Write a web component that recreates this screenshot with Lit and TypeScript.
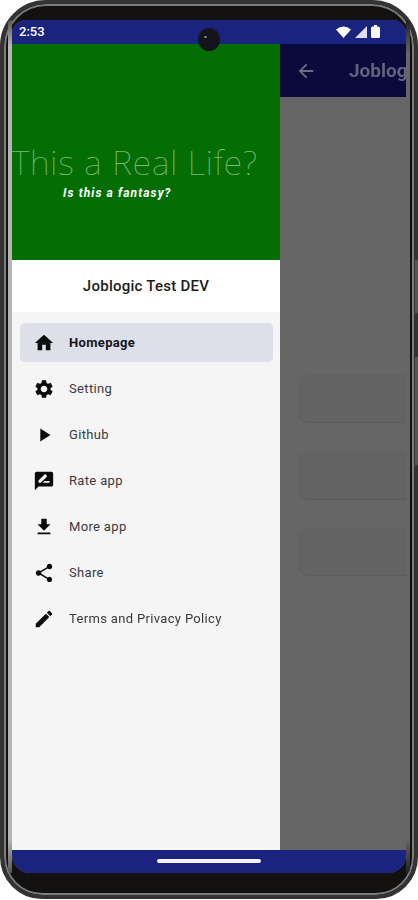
import { LitElement, html, css, svg } from "lit";
import { customElement } from "lit/decorators.js";

const ICONS: Record<string, string> = {
  home: "M10 20v-6h4v6h5v-8h3L12 3 2 12h3v8z",
  settings: "M19.14 12.94c.04-.3.06-.61.06-.94 0-.32-.02-.64-.07-.94l2.03-1.58c.18-.14.23-.41.12-.61l-1.92-3.32c-.12-.22-.37-.29-.59-.22l-2.39.96c-.5-.38-1.03-.7-1.62-.94l-.36-2.54c-.04-.24-.24-.41-.48-.41h-3.84c-.24 0-.43.17-.47.41l-.36 2.54c-.59.24-1.13.57-1.62.94l-2.39-.96c-.22-.08-.47 0-.59.22L2.74 8.87c-.12.21-.08.47.12.61l2.03 1.58c-.05.3-.09.63-.09.94s.02.64.07.94l-2.03 1.58c-.18.14-.23.41-.12.61l1.92 3.32c.12.22.37.29.59.22l2.39-.96c.5.38 1.03.7 1.62.94l.36 2.54c.05.24.24.41.48.41h3.84c.24 0 .44-.17.47-.41l.36-2.54c.59-.24 1.13-.56 1.62-.94l2.39.96c.22.08.47 0 .59-.22l1.92-3.32c.12-.22.07-.47-.12-.61l-2.01-1.58zM12 15.6c-1.98 0-3.6-1.62-3.6-3.6s1.62-3.6 3.6-3.6 3.6 1.62 3.6 3.6-1.62 3.6-3.6 3.6z",
  play: "M8 5v14l11-7z",
  rate: "M20 2H4c-1.1 0-1.99.9-1.99 2L2 22l4-4h14c1.1 0 2-.9 2-2V4c0-1.1-.9-2-2-2zM6 14v-2.47l6.88-6.88c.2-.2.51-.2.71 0l1.77 1.77c.2.2.2.51 0 .71L8.47 14H6zm12 0h-7.5l2-2H18v2z",
  download: "M19 9h-4V3H9v6H5l7 7 7-7zM5 18v2h14v-2H5z",
  share: "M18 16.08c-.76 0-1.44.3-1.96.77L8.91 12.7c.05-.23.09-.46.09-.7s-.04-.47-.09-.7l7.05-4.11c.54.5 1.25.81 2.04.81 1.66 0 3-1.34 3-3s-1.34-3-3-3-3 1.34-3 3c0 .24.04.47.09.7L8.04 9.81C7.5 9.31 6.79 9 6 9c-1.66 0-3 1.34-3 3s1.34 3 3 3c.79 0 1.5-.31 2.04-.81l7.12 4.16c-.05.21-.08.43-.08.65 0 1.61 1.31 2.92 2.92 2.92s2.92-1.31 2.92-2.92-1.31-2.92-2.92-2.92z",
  edit: "M3 17.25V21h3.75L17.81 9.94l-3.75-3.75L3 17.25zM20.71 7.04c.39-.39.39-1.02 0-1.41l-2.34-2.34c-.39-.39-1.02-.39-1.41 0l-1.83 1.83 3.75 3.75 1.83-1.83z",
  back: "M20 11H7.83l5.59-5.59L12 4l-8 8 8 8 1.41-1.41L7.83 13H20v-2z",
};

const ITEMS = [
  { icon: "home", label: "Homepage", active: true },
  { icon: "settings", label: "Setting" },
  { icon: "play", label: "Github" },
  { icon: "rate", label: "Rate app" },
  { icon: "download", label: "More app" },
  { icon: "share", label: "Share" },
  { icon: "edit", label: "Terms and Privacy Policy" },
];

const icon = (name: string, cls = "icon") =>
  html`<svg class=${cls} viewBox="0 0 24 24">${svg`<path d=${ICONS[name]}></path>`}</svg>`;

@customElement("app-root")
export class AppRoot extends LitElement {
  static styles = css`
    :host {
      display: block;
      position: relative;
      width: 418px;
      height: 900px;
      background: #fff;
      font-family: Roboto, "Liberation Sans", sans-serif;
      overflow: hidden;
    }
    .phone {
      position: relative;
      box-sizing: border-box;
      width: 418px;
      height: 899px;
      background: #121110;
      border: 4px solid #333;
      border-radius: 46px 46px 42px 42px;
      padding: 16px 4px 22px 4px;
      display: flex;
      box-shadow: inset 0 0 0 2px #7c7c7c;
      filter: blur(0.45px);
    }
    .edge {
      width: 4px;
      flex: none;
      background: linear-gradient(#555, #b4b4b4 3%, #b4b4b4 96%, #555);
      border-radius: 14px 0 0 14px;
    }
    .edge.right {
      background: linear-gradient(#222, #666 4%, #666 96%, #222);
      border-radius: 0 14px 14px 0;
    }
    .screen {
      flex: 1;
      min-width: 0;
      display: flex;
      flex-direction: column;
      border-radius: 14px 14px 18px 18px;
      overflow: hidden;
      background: #666;
    }
    .status {
      height: 23px;
      flex: none;
      background: #1a237e;
      color: #fff;
      display: flex;
      align-items: center;
      justify-content: space-between;
      padding: 0 26px 1px 7px;
      font-size: 13px;
      font-weight: 500;
    }
    .status-icons {
      display: flex;
      align-items: center;
      gap: 4px;
    }
    .status-icons svg {
      display: block;
      fill: #fff;
    }
    .camera {
      position: absolute;
      left: 194px;
      top: 24px;
      width: 22px;
      height: 23px;
      border-radius: 50%;
      background: #14141c;
    }
    .camera::after {
      content: "";
      position: absolute;
      left: 6px;
      top: 8px;
      width: 3px;
      height: 2px;
      border-radius: 50%;
      background: #8a8a98;
    }
    .side {
      position: absolute;
      right: 0;
      width: 3px;
      background: #555;
    }
    .side.power {
      top: 260px;
      height: 53px;
    }
    .side.volume {
      top: 357px;
      height: 108px;
    }
    .main {
      flex: 1;
      min-height: 0;
      display: flex;
    }
    .drawer {
      width: 268px;
      flex: none;
      display: flex;
      flex-direction: column;
      background: #f5f5f5;
    }
    .hero {
      height: 216px;
      flex: none;
      background: #046e04;
      display: flex;
      flex-direction: column;
      align-items: flex-start;
      padding-top: 96px;
      box-sizing: border-box;
    }
    .hero-title {
      font-family: "Noto Sans", sans-serif;
      font-weight: 100;
      font-size: 34px;
      line-height: 44px;
      letter-spacing: 0.85px;
      color: #7dbb7d;
      white-space: nowrap;
    }
    .hero-sub {
      font-size: 12px;
      line-height: 14px;
      font-weight: 700;
      font-style: italic;
      letter-spacing: 1.1px;
      color: #fff;
      margin: 2px 0 0 51px;
    }
    .app-name {
      height: 52px;
      flex: none;
      background: #fff;
      display: flex;
      align-items: center;
      justify-content: center;
      font-size: 15px;
      font-weight: 500;
      letter-spacing: 0.25px;
      color: #1c1c1c;
    }
    .list {
      flex: 1;
      display: flex;
      flex-direction: column;
      gap: 7px;
      padding: 11px 7px 0 8px;
    }
    .row {
      height: 39px;
      display: flex;
      align-items: center;
      gap: 14px;
      padding-left: 13px;
      border-radius: 5px;
      font-size: 13px;
      font-weight: 400;
      letter-spacing: 0.34px;
      color: #3a3a3a;
    }
    .row.active {
      background: #dddfe9;
      font-weight: 700;
      color: #15151c;
    }
    .icon {
      width: 22px;
      height: 22px;
      flex: none;
      fill: #0b0b0b;
    }
    .content {
      flex: 1;
      min-width: 0;
      overflow: hidden;
      display: flex;
      flex-direction: column;
    }
    .appbar {
      height: 53px;
      flex: none;
      background: #0a0a3c;
      color: #62627a;
      display: flex;
      align-items: center;
      gap: 32px;
      padding-left: 15px;
      font-size: 19px;
      font-weight: 700;
      white-space: nowrap;
    }
    .appbar svg {
      width: 22px;
      height: 22px;
      flex: none;
      fill: #6d6d80;
    }
    .cards {
      flex: 1;
      background: #666;
      display: flex;
      flex-direction: column;
      gap: 28.5px;
      padding: 277px 0 0 18px;
    }
    .card {
      height: 48px;
      margin-right: -20px;
      border-radius: 12px;
      background: #636363;
      box-shadow: 0 1px 1px #5b5b5b;
    }
    .nav {
      height: 22px;
      flex: none;
      background: #1a237e;
      display: flex;
      align-items: center;
      justify-content: center;
      padding-bottom: 1px;
    }
    .pill {
      width: 104px;
      height: 4px;
      border-radius: 2px;
      background: #f3f3fa;
    }
  `;

  render() {
    return html`
      <div class="phone">
        <div class="edge"></div>
        <div class="screen">
          <div class="status">
            <span>2:53</span>
            <div class="status-icons">
              <svg width="15" height="12" viewBox="0 0 15 12"><path d="M0 3.5 Q7.5-2.5 15 3.5L7.5 12z"></path></svg>
              <svg width="12" height="12" viewBox="0 0 12 12"><path d="M0 12 12 0v12z" opacity=".85"></path></svg>
              <svg width="9" height="13" viewBox="0 0 9 13"><path d="M3 0h3v1.500h1.500q1.500 0 1.500 1.500v8.500q0 1.500-1.500 1.500h-6q-1.500 0-1.500-1.500V3q0-1.500 1.500-1.500H3z"></path></svg>
            </div>
          </div>
          <div class="main">
            <nav class="drawer">
              <div class="hero">
                <div class="hero-title">This a Real Life?</div>
                <div class="hero-sub">Is this a fantasy?</div>
              </div>
              <div class="app-name">Joblogic Test DEV</div>
              <div class="list">
                ${ITEMS.map(
                  (i) => html`<div class="row ${i.active ? "active" : ""}">${icon(i.icon)}<span>${i.label}</span></div>`
                )}
              </div>
            </nav>
            <div class="content">
              <div class="appbar">${icon("back", "")}<span>Joblogic Test DEV</span></div>
              <div class="cards">
                <div class="card"></div>
                <div class="card"></div>
                <div class="card"></div>
              </div>
            </div>
          </div>
          <div class="nav"><div class="pill"></div></div>
        </div>
        <div class="edge right"></div>
        <div class="camera"></div>
      </div>
      <div class="side power"></div>
      <div class="side volume"></div>
    `;
  }
}
